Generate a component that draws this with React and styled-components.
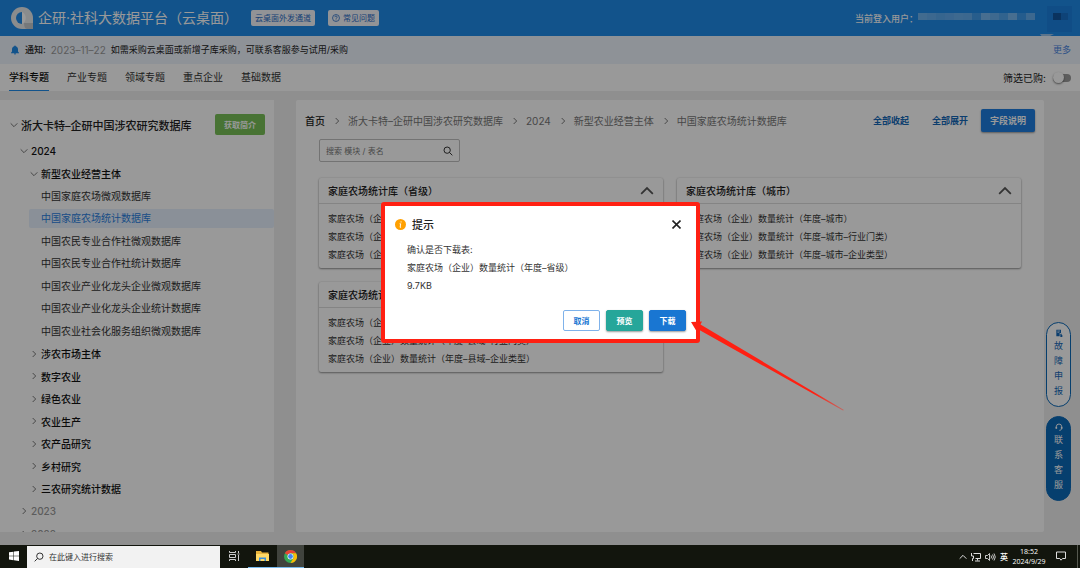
import React from "react";
import styled, { createGlobalStyle, css } from "styled-components";

const GlobalStyle = createGlobalStyle`
  * {
    box-sizing: border-box;
  }
  body {
    margin: 0;
    font-family: Inter, "Noto Sans CJK SC", sans-serif;
    font-size: 10px;
    color: #222;
  }
  button, input {
    font-family: inherit;
  }
  ul, ol, p, h1, h2 {
    margin: 0;
    padding: 0;
    list-style: none;
    font-weight: normal;
  }
  a {
    color: inherit;
    text-decoration: none;
  }
`;

const Screen = styled.div`
  display: flex;
  flex-direction: column;
  height: 100vh;
  overflow: hidden;
`;

const Page = styled.div`
  position: relative;
  display: flex;
  flex: 1;
  flex-direction: column;
  min-height: 0;
  background: #eee;
`;

const Header = styled.header`
  display: flex;
  align-items: center;
  height: 36px;
  padding: 0 8px 0 10px;
  background: #1e8ae8;
  color: #fff;
`;

const SiteTitle = styled.h1`
  margin-left: 4px;
  font-size: 14px;
  line-height: 20px;
  white-space: nowrap;
`;

const HeaderBtn = styled.button`
  display: flex;
  align-items: center;
  gap: 3px;
  height: 16px;
  margin-left: 13px;
  padding: 0 4px;
  border: none;
  border-radius: 2px;
  background: #f4f6fb;
  color: #2a6bc4;
  font-size: 8px;
  line-height: 16px;
  white-space: nowrap;
`;

const UserInfo = styled.div`
  display: flex;
  align-items: center;
  margin-left: auto;
  font-size: 9px;
  font-weight: 500;
`;

const Notice = styled.div`
  display: flex;
  align-items: center;
  gap: 5px;
  height: 28px;
  padding: 0 9px 0 10px;
  background: #edf3fc;
  font-size: 9px;
  line-height: 16px;
  b {
    font-weight: 500;
  }
  time {
    color: #999;
    font-size: 10px;
  }
  a {
    margin-left: auto;
    color: #4a86e0;
  }
`;

const TabBar = styled.nav`
  display: flex;
  flex-shrink: 0;
  align-items: center;
  gap: 18px;
  height: 27px;
  padding: 0 9px;
  background: #fff;
`;

const Tab = styled.a`
  height: 27px;
  line-height: 26px;
  border-bottom: 1px solid transparent;
  color: #333;
  ${({ $active }) =>
    $active &&
    css`
      border-color: #1e8ae8;
      color: #111;
      font-weight: 500;
    `}
`;

const BoughtFilter = styled.label`
  display: flex;
  align-items: center;
  gap: 7px;
  margin-left: auto;
`;

const Switch = styled.input`
  display: flex;
  align-items: center;
  appearance: none;
  width: 18px;
  height: 8px;
  margin: 0;
  border-radius: 4px;
  background: #9c9c9c;
  &::before {
    content: "";
    width: 11px;
    height: 11px;
    border-radius: 50%;
    background: #fff;
    box-shadow: 0 1px 2px rgba(0, 0, 0, 0.5);
  }
`;

const Body = styled.div`
  display: flex;
  flex: 1;
  gap: 22px;
  min-height: 0;
  padding: 9px 36px 13px 0;
`;

const Sidebar = styled.aside`
  flex: 0 0 274px;
  overflow: hidden;
  background: #fff;
`;

const SidebarHead = styled.div`
  display: flex;
  align-items: center;
  gap: 3px;
  height: 21px;
  margin: 14px 9px 5px 10px;
  font-size: 11px;
  font-weight: 500;
  white-space: nowrap;
`;

const IntroBtn = styled.button`
  width: 50px;
  height: 21px;
  margin-left: auto;
  padding: 0;
  border: none;
  border-radius: 2px;
  background: #78c058;
  color: #fff;
  font-size: 8px;
  font-weight: 700;
`;

const Tree = styled.ul`
  display: grid;
  grid-template-rows: repeat(18, 1fr);
  height: 405px;
`;

const TreeRow = styled.li`
  display: flex;
  align-items: center;
  gap: 3px;
  padding-left: ${({ $level }) => $level * 10 + 10}px;
  color: ${({ $muted }) => ($muted ? "#999" : "#111")};
  font-weight: 500;
`;

const Leaf = styled.a`
  flex: 1;
  margin-left: 9px;
  padding-left: 12px;
  border-radius: 2px;
  line-height: 19px;
  font-weight: 400;
  color: ${({ $active }) => ($active ? "#2a80e0" : "#333")};
  background: ${({ $active }) => ($active ? "#e7f0fd" : "none")};
`;

const Main = styled.main`
  flex: 1;
  min-width: 0;
  border-radius: 2px;
  background: #fff;
`;

const MainHead = styled.div`
  display: flex;
  align-items: center;
  height: 23px;
  margin: 9px 9px 7px;
`;

const Crumbs = styled.ol`
  display: flex;
  align-items: center;
  gap: 8px;
  margin-right: auto;
  white-space: nowrap;
  li {
    display: flex;
    align-items: center;
    gap: 7px;
    color: #777;
  }
  li:first-child {
    color: #222;
    font-weight: 500;
  }
`;

const TextBtn = styled.button`
  margin-right: 23px;
  padding: 0;
  border: none;
  background: none;
  color: #1468b8;
  font-size: 9px;
  font-weight: 700;
`;

const FieldBtn = styled.button`
  width: 54px;
  height: 23px;
  margin-left: -10px;
  padding: 0;
  border: none;
  border-radius: 2px;
  background: #1e7ee0;
  box-shadow: 0 1px 2px rgba(0, 0, 0, 0.4);
  color: #fff;
  font-size: 9px;
  font-weight: 700;
`;

const SearchBox = styled.label`
  display: flex;
  align-items: center;
  width: 141px;
  height: 23px;
  margin: 0 23px 16px;
  padding: 0 6px;
  border: 1px solid #c0c0c0;
  border-radius: 2px;
  input {
    flex: 1;
    min-width: 0;
    padding: 0;
    border: none;
    outline: none;
    background: none;
    font-size: 8px;
  }
  input::placeholder {
    color: #777;
  }
`;

const Cards = styled.div`
  display: grid;
  grid-template-columns: 1fr 1fr;
  gap: 14px;
  margin: 0 23px;
`;

const Card = styled.section`
  border-radius: 2px;
  background: #fff;
  box-shadow: 0 1px 2px rgba(0, 0, 0, 0.4), 0 0 2px rgba(0, 0, 0, 0.15);
`;

const CardHead = styled.div`
  display: flex;
  align-items: center;
  justify-content: space-between;
  height: 26px;
  padding: 0 9px;
  border-bottom: 1px solid #ddd;
  h2 {
    font-size: 10px;
    font-weight: 500;
  }
`;

const CardList = styled.ul`
  padding: 6px 9px 4px;
  color: #333;
  font-size: 9px;
  line-height: 18px;
`;

const Mask = styled.div`
  position: absolute;
  inset: 0;
  background: rgba(0, 0, 0, 0.4);
`;

const Float = styled.div`
  position: absolute;
  right: 9px;
  top: 322px;
  display: flex;
  flex-direction: column;
  gap: 9px;
`;

const FloatBtn = styled.button`
  display: flex;
  flex-direction: column;
  align-items: center;
  width: 25px;
  height: 85px;
  padding: 6px 7px;
  border: 1px solid #0b69b8;
  border-radius: 13px;
  background: ${({ $filled }) => ($filled ? "#0b69b8" : "#fff")};
  color: ${({ $filled }) => ($filled ? "#fff" : "#1468b8")};
  font-size: 9px;
  line-height: 15px;
  svg {
    flex-shrink: 0;
    margin-bottom: 1px;
  }
`;

const Dialog = styled.div`
  position: absolute;
  left: 381px;
  top: 202px;
  width: 319px;
  padding: 11px 10px 8px;
  border: 4px solid #ff2012;
  border-radius: 3px;
  background: #fff;
`;

const DialogHead = styled.div`
  display: flex;
  align-items: center;
  gap: 6px;
  height: 14px;
  h2 {
    font-size: 11px;
    font-weight: 500;
  }
`;

const CloseBtn = styled.button`
  display: flex;
  margin-left: auto;
  padding: 3px 5px;
  border: none;
  background: none;
`;

const DialogText = styled.div`
  margin: 10px 12px 15px;
  color: #333;
  font-size: 9px;
  line-height: 18px;
`;

const DialogActions = styled.div`
  display: flex;
  justify-content: flex-end;
  gap: 6px;
`;

const ActionBtn = styled.button`
  width: 37px;
  height: 21px;
  padding: 0;
  border: 1px solid ${({ $line, $bg }) => $line || $bg};
  border-radius: 2px;
  background: ${({ $bg }) => $bg};
  box-shadow: ${({ $line }) => ($line ? "none" : "0 1px 2px rgba(0, 0, 0, 0.4)")};
  color: ${({ $line }) => ($line ? "#1976d2" : "#fff")};
  font-size: 8px;
  font-weight: 700;
`;

const Arrow = styled.svg`
  position: absolute;
  left: 690px;
  top: 318px;
`;

const Mosaic = styled.svg`
  overflow: visible;
`;

const Taskbar = styled.footer`
  display: flex;
  flex-shrink: 0;
  align-items: center;
  height: 23px;
  background: #12150d;
  color: #fff;
`;

const TaskBtn = styled.button`
  display: flex;
  align-items: center;
  justify-content: center;
  width: ${({ $width }) => $width || 27}px;
  height: 23px;
  padding: 0;
  border: none;
  border-bottom: 1px solid ${({ $open }) => ($open ? "#76b9ed" : "transparent")};
  background: ${({ $active }) => ($active ? "#40433d" : "none")};
  color: #fff;
`;

const TaskSearch = styled.label`
  display: flex;
  align-items: center;
  gap: 5px;
  width: 193px;
  height: 22px;
  padding: 0 7px;
  background: #f2f2f2;
  color: #222;
  input {
    flex: 1;
    min-width: 0;
    padding: 0;
    border: none;
    outline: none;
    background: none;
    font-size: 8px;
  }
  input::placeholder {
    color: #333;
  }
`;

const Tray = styled.div`
  display: flex;
  align-items: center;
  gap: 4px;
  height: 23px;
  margin-left: auto;
  margin-right: 2px;
  padding-right: 5px;
  border-right: 1px solid #55584f;
  font-size: 8px;
  font-weight: 500;
`;

const Clock = styled.div`
  width: 34px;
  font-family: "Open Sans", sans-serif;
  font-size: 7px;
  line-height: 10px;
  text-align: center;
`;

const Chevron = ({ dir = "right", size = 8, color = "#777", width = 1.5 }) => {
  const paths = {
    right: "M4 1.5 8.5 6 4 10.5",
    down: "M1 3.5 6 8.5 11 3.5",
    up: "M1 8.5 6 3.5 11 8.5",
  };
  return (
    <svg width={size} height={size} viewBox="0 0 12 12" fill="none" stroke={color} strokeWidth={width}>
      <path d={paths[dir]} />
    </svg>
  );
};

const Logo = () => (
  <svg width="24" height="24" viewBox="0 0 24 24">
    <path d="M12 1a11 11 0 1 0 0 22h11V12A11 11 0 0 0 12 1z" fill="#e6e9ec" />
    <path d="M14 17h9v6H17c-2 0-3-3-3-6z" fill="#c4c8cc" />
    <path d="M12 6a6 6 0 0 0 0 12z" fill="#1e8ae8" />
    <path d="M12 6c5 2 5 10 0 12z" fill="#fff" />
  </svg>
);

const MagnifierIcon = ({ size = 10, flip }) => (
  <svg width={size} height={size} viewBox="0 0 12 12" fill="none" stroke="currentColor" strokeWidth="1.1">
    <circle cx={flip ? 7 : 5} cy="5" r="3.800" />
    <path d={flip ? "M4.200 7.800.8 11.200" : "M7.800 7.800 11.200 11.200"} />
  </svg>
);

const leaves = [
  "中国家庭农场微观数据库",
  "中国家庭农场统计数据库",
  "中国农民专业合作社微观数据库",
  "中国农民专业合作社统计数据库",
  "中国农业产业化龙头企业微观数据库",
  "中国农业产业化龙头企业统计数据库",
  "中国农业社会化服务组织微观数据库",
];

const groups = ["涉农市场主体", "数字农业", "绿色农业", "农业生产", "农产品研究", "乡村研究", "三农研究统计数据"];

const crumbs = ["首页", "浙大卡特–企研中国涉农研究数据库", "2024", "新型农业经营主体", "中国家庭农场统计数据库"];

const cards = ["省级", "城市", "县域"];

// pixelated user name, one value per 9px block
const blocks = [0.45, 0.4, 0.35, 0.38, 0.42, 0.4, 0.2, 0.5, 0.42, 0.3, 0.5, 0.18, 0.4];

const App = () => {
  return (
    <Screen>
      <GlobalStyle />
      <Page>
        <Header>
          <Logo />
          <SiteTitle>企研·社科大数据平台（云桌面）</SiteTitle>
          <HeaderBtn>云桌面外发通道</HeaderBtn>
          <HeaderBtn>
            <svg width="8" height="8" viewBox="0 0 12 12" fill="none" stroke="currentColor" strokeWidth="1.2">
              <circle cx="6" cy="6" r="5.200" />
              <path d="M4.200 4.800c0-2.400 3.600-2.400 3.600 0 0 1.200-1.800 1.200-1.800 2.400M6 8.200v1.200" />
            </svg>
            常见问题
          </HeaderBtn>
          <UserInfo>
            当前登入用户：
            <Mosaic width="154" height="36" viewBox="0 0 154 36">
              {blocks.map((opacity, i) => (
                <rect key={i} x={i * 9} y="13" width="9" height="7" fill="#cfe3f7" opacity={opacity} />
              ))}
              <rect x="129" y="6" width="25" height="26" fill="#1a7cd8" opacity="0.6" />
              <rect x="135" y="13" width="8" height="7" fill="#12559f" />
              <rect x="143" y="13" width="7" height="7" fill="#1871c8" />
              <path d="M122 34h14l-8 4h-3z" fill="#9cc4ea" />
            </Mosaic>
          </UserInfo>
        </Header>
        <Notice>
          <svg width="10" height="10" viewBox="0 0 12 12" fill="#1e8ae8">
            <path d="M6 .5c.6 0 .9.400.9.900C8.800 1.900 9.600 3.300 9.600 5v2.800l1.200 1.400v.6H1.200v-.6l1.200-1.400V5c0-1.700.8-3.100 2.700-3.600 0-.5.3-.9.900-.9zM4.800 10.300h2.400c0 1.600-2.400 1.600-2.400 0z" />
          </svg>
          <b>通知:</b>
          <time>2023–11–22</time>
          <span>如需采购云桌面或新增子库采购，可联系客服参与试用/采购</span>
          <a href="#more">更多</a>
        </Notice>
        <TabBar>
          <Tab href="#subject" $active>学科专题</Tab>
          <Tab href="#industry">产业专题</Tab>
          <Tab href="#field">领域专题</Tab>
          <Tab href="#company">重点企业</Tab>
          <Tab href="#base">基础数据</Tab>
          <BoughtFilter>
            筛选已购:
            <Switch type="checkbox" />
          </BoughtFilter>
        </TabBar>
        <Body>
          <Sidebar>
            <SidebarHead>
              <Chevron dir="down" />
              浙大卡特–企研中国涉农研究数据库
              <IntroBtn>获取简介</IntroBtn>
            </SidebarHead>
            <Tree>
              <TreeRow $level={1}>
                <Chevron dir="down" />
                2024
              </TreeRow>
              <TreeRow $level={2}>
                <Chevron dir="down" />
                新型农业经营主体
              </TreeRow>
              {leaves.map((name, i) => (
                <TreeRow key={name} $level={1}>
                  <Leaf href="#db" $active={i === 1}>{name}</Leaf>
                </TreeRow>
              ))}
              {groups.map((name) => (
                <TreeRow key={name} $level={2}>
                  <Chevron />
                  {name}
                </TreeRow>
              ))}
              <TreeRow $level={1} $muted>
                <Chevron />
                2023
              </TreeRow>
              <TreeRow $level={1} $muted>
                <Chevron />
                2022
              </TreeRow>
            </Tree>
          </Sidebar>
          <Main>
            <MainHead>
              <Crumbs>
                {crumbs.map((name, i) => (
                  <li key={name}>
                    {i > 0 && <Chevron />}
                    {name}
                  </li>
                ))}
              </Crumbs>
              <TextBtn>全部收起</TextBtn>
              <TextBtn>全部展开</TextBtn>
              <FieldBtn>字段说明</FieldBtn>
            </MainHead>
            <SearchBox>
              <input aria-label="搜索" placeholder="搜索 模块 / 表名" />
              <MagnifierIcon />
            </SearchBox>
            <Cards>
              {cards.map((area) => (
                <Card key={area}>
                  <CardHead>
                    <h2>家庭农场统计库（{area}）</h2>
                    <Chevron dir="up" size={14} color="#555" />
                  </CardHead>
                  <CardList>
                    <li>家庭农场（企业）数量统计（年度–{area}）</li>
                    <li>家庭农场（企业）数量统计（年度–{area}–行业门类）</li>
                    <li>家庭农场（企业）数量统计（年度–{area}–企业类型）</li>
                  </CardList>
                </Card>
              ))}
            </Cards>
          </Main>
        </Body>
        <Float>
          <FloatBtn>
            <svg width="8" height="8" viewBox="0 0 12 12" fill="currentColor">
              <path d="M2 1h7v5H7v5H2zM8 7h2v2h1v3H8z" />
              <path d="M3.500 3h4M3.500 5h3" stroke="#fff" />
            </svg>
            <span>故障申报</span>
          </FloatBtn>
          <FloatBtn $filled>
            <svg width="8" height="8" viewBox="0 0 12 12" fill="none" stroke="currentColor" strokeWidth="1.4">
              <path d="M2 8V5.500a4 4 0 0 1 8 0V8c0 2-1.500 3-3.500 3" />
              <path d="M2 5.500v3M10 5.500v3" strokeWidth="2.400" />
            </svg>
            <span>联系客服</span>
          </FloatBtn>
        </Float>
        <Mask />
        <Dialog role="dialog" aria-label="提示">
          <DialogHead>
            <svg width="11" height="11" viewBox="0 0 12 12">
              <circle cx="6" cy="6" r="6" fill="#ffa000" />
              <path d="M6.600 2.600v1.200M5 5.200h1.200L5.600 9h1" fill="none" stroke="#fff" />
            </svg>
            <h2>提示</h2>
            <CloseBtn aria-label="关闭">
              <svg width="9" height="9" viewBox="0 0 9 9" stroke="#222" strokeWidth="1.6">
                <path d="M.5.5l8 8M8.500.5l-8 8" />
              </svg>
            </CloseBtn>
          </DialogHead>
          <DialogText>
            <p>确认是否下载表:</p>
            <p>家庭农场（企业）数量统计（年度–省级）</p>
            <p>9.7KB</p>
          </DialogText>
          <DialogActions>
            <ActionBtn $bg="#fff" $line="#7fb2ea">取消</ActionBtn>
            <ActionBtn $bg="#26a69a">预览</ActionBtn>
            <ActionBtn $bg="#1976d2">下载</ActionBtn>
          </DialogActions>
        </Dialog>
        <Arrow width="156" height="96" viewBox="0 0 156 96">
          <defs>
            <linearGradient id="tail">
              <stop offset="0.8" stopColor="#ff2012" />
              <stop offset="1" stopColor="#ff2012" stopOpacity="0.4" />
            </linearGradient>
          </defs>
          <path d="M1 4 12 3.500 10.500 6.500 154 92 153 92.500 8.500 11.500 7 14z" fill="url(#tail)" />
        </Arrow>
      </Page>
      <Taskbar>
        <TaskBtn aria-label="开始">
          <svg width="10" height="10" viewBox="0 0 10 10" fill="#fff">
            <path d="M0 1.300 4.500.7v4H0zM5 .6 10 0v4.700H5zM0 5.200h4.500v4L0 8.600zM5 5.200h5V10l-5-.7z" />
          </svg>
        </TaskBtn>
        <TaskSearch>
          <MagnifierIcon flip />
          <input aria-label="搜索" placeholder="在此键入进行搜索" />
        </TaskSearch>
        <TaskBtn $width={28} aria-label="任务视图">
          <svg width="11" height="10" viewBox="0 0 11 10" fill="none" stroke="#ccc">
            <path d="M.5 0v1.500h6V0M.5 10V8.500h6V10M.5 3.500h6v3h-6zM9.500 0v2M9.500 4v6" />
            <path d="M8.500 3h2" />
          </svg>
        </TaskBtn>
        <TaskBtn $width={29} $open aria-label="文件资源管理器">
          <svg width="13" height="12" viewBox="0 0 13 12">
            <path d="M0 1h5l1 1.500h6.500V11H0z" fill="#e8b33c" />
            <path d="M0 4h13v7H0z" fill="#ffd966" />
            <path d="M3 11V7.500h7V11H8.500V9h-4v2z" fill="#3b8fdc" />
          </svg>
        </TaskBtn>
        <TaskBtn $open $active aria-label="Chrome">
          <svg width="13" height="13" viewBox="0 0 24 24">
            <circle cx="12" cy="12" r="12" fill="#34a853" />
            <path d="M12 0a12 12 0 0 1 10.400 6H12a6 6 0 0 0-5.200 3L1.600 6A12 12 0 0 1 12 0z" fill="#ea4335" />
            <path d="M22.400 6A12 12 0 0 1 12 24l5.200-9A6 6 0 0 0 12 6z" fill="#fbbc05" />
            <circle cx="12" cy="12" r="5.500" fill="#fff" />
            <circle cx="12" cy="12" r="4.400" fill="#4285f4" />
          </svg>
        </TaskBtn>
        <Tray>
          <Chevron dir="up" color="#ddd" />
          <svg width="10" height="10" viewBox="0 0 10 10" fill="none" stroke="#ddd">
            <path d="M2.500 1.500h7v5h-5M6.500 6.500v2M4 9h5M.5 1v3h2v2.500h-1V9" />
          </svg>
          <svg width="11" height="10" viewBox="0 0 11 10" fill="none" stroke="#ddd" strokeWidth="0.9">
            <path d="M.5 3.500h2L4.500 1.500v7l-2-2h-2zM6 3.500q1 1.500 0 3M7.500 2.500q2 2.500 0 5M9 1.500q2.600 3.500 0 7" />
          </svg>
          <span>英</span>
          <Clock>
            18:52
            <br />
            2024/9/29
          </Clock>
          <TaskBtn $width={22} aria-label="通知中心">
            <svg width="10" height="10" viewBox="0 0 10 10" fill="none" stroke="#ddd">
              <path d="M.5 1h9v6.500h-3L5 9.200 3.800 7.500H.5z" />
            </svg>
          </TaskBtn>
        </Tray>
      </Taskbar>
    </Screen>
  );
};

export default App;
